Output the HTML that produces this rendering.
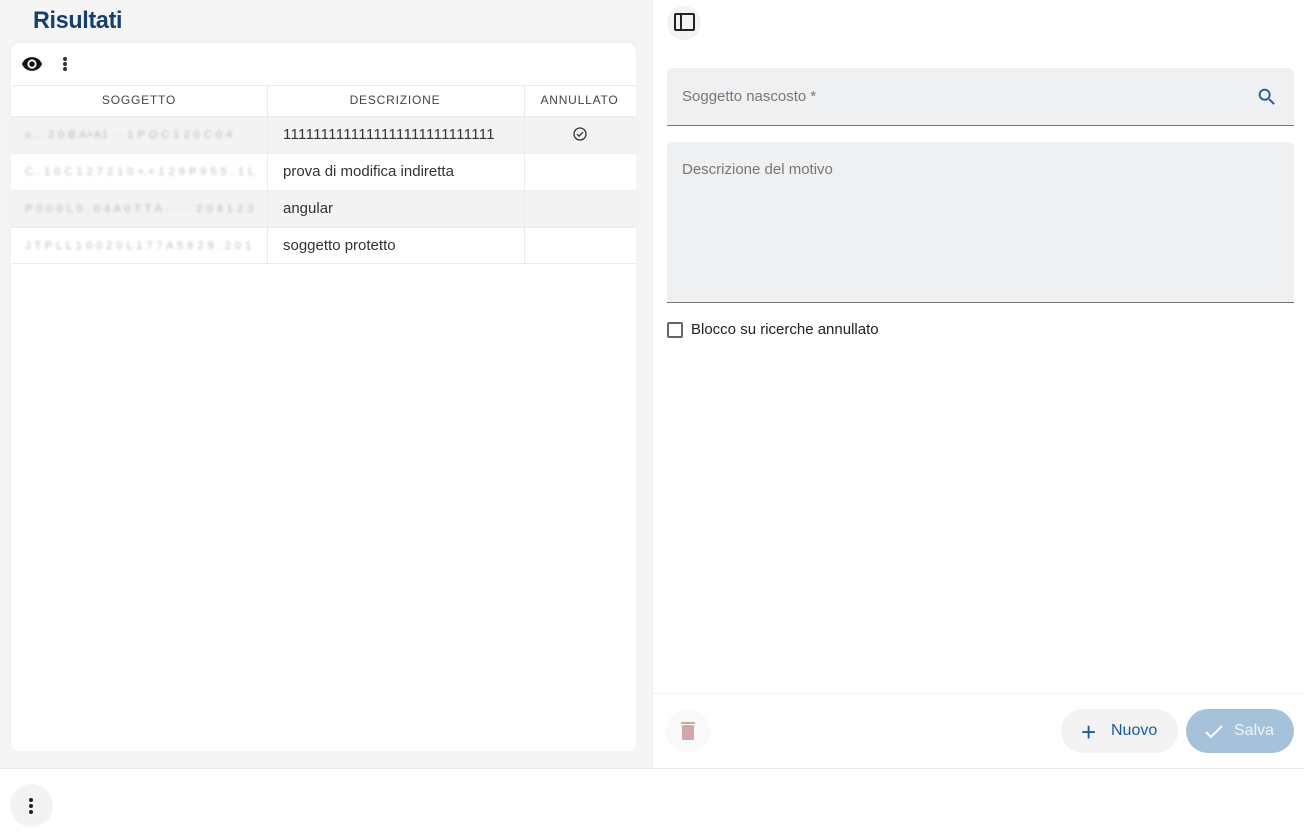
<!DOCTYPE html>
<html><head><meta charset="utf-8"><style>
*{box-sizing:border-box;margin:0;padding:0}
body{width:1304px;height:834px;position:relative;overflow:hidden;background:#fff;font-family:"Liberation Sans",sans-serif;color:#222}
.abs{position:absolute}
.left{left:0;top:0;width:652px;height:768px;background:#f5f5f5}
h1{position:absolute;left:33px;top:7px;font-size:24px;font-weight:bold;color:#173f6b;letter-spacing:-0.3px;transform:scaleX(.97);transform-origin:left}
.card{left:11px;top:43px;width:625px;height:708px;background:#fff;border-radius:8px;box-shadow:0 -2px 4px rgba(0,0,0,.04)}
.th{position:absolute;top:43px;height:30px;font-size:12px;letter-spacing:.8px;color:#444;text-align:center;line-height:28px}
.row{position:absolute;left:0;width:625px;height:37px;border-top:1px solid #ececec}
.cell{position:absolute;top:0;height:37px;line-height:36px;font-size:15px;color:#333}
.blur{left:14px;width:230px;color:#bbb;filter:blur(1.2px);font-size:11px;letter-spacing:.5px;overflow:hidden;white-space:nowrap}
.vl{position:absolute;top:43px;width:1px;height:178px;background:#ececec}
.field{position:absolute;left:667px;width:627px;background:#eff0f2;border-radius:6px 6px 0 0;border-bottom:1px solid #777}
.lbl{position:absolute;left:15px;font-size:15px;color:#777}
</style></head><body>
<div class="abs left"></div>
<h1>Risultati</h1>
<div class="abs card">
 <svg class="abs" style="left:9px;top:10px" width="24" height="22" viewBox="0 0 24 24"><path fill="#111" d="M12 4.5C7 4.5 2.7 7.6 1 12c1.7 4.4 6 7.5 11 7.5s9.3-3.1 11-7.5c-1.7-4.4-6-7.5-11-7.5zM12 17a5 5 0 1 1 0-10 5 5 0 0 1 0 10zm0-8a3 3 0 1 0 0 6 3 3 0 0 0 0-6z"/></svg>
 <div class="abs" style="left:52px;top:14px;width:4px;height:4px;border-radius:50%;background:#333;box-shadow:0 5px 0 #333,0 10px 0 #333"></div>
 <div class="abs" style="left:0;top:42px;width:625px;height:1px;background:#ececec"></div>
 <div class="th" style="left:0;width:256px">SOGGETTO</div>
 <div class="th" style="left:256px;width:256px">DESCRIZIONE</div>
 <div class="th" style="left:512px;width:113px">ANNULLATO</div>
 <div class="row" style="top:73px;background:#f3f3f3"><div class="cell blur">v.... 2 0 B A+A1 · · 1 P O C 1 2 0 C 0 4</div><div class="cell" style="left:272px;width:225px;overflow:hidden;white-space:nowrap;letter-spacing:.3px">1111111111111111111111111111</div>
 <svg class="abs" style="left:562px;top:10px" width="14" height="14" viewBox="0 0 14 14"><circle cx="7" cy="7" r="6" fill="none" stroke="#333" stroke-width="1.3"/><path d="M4 7.2l2 2 4-4" fill="none" stroke="#333" stroke-width="1.3"/></svg></div>
 <div class="row" style="top:110px"><div class="cell blur">C.. 1 0 C 1 2 7 2 1 0 +.+ 1 2 9 P 9 5 5 . 1 L</div><div class="cell" style="left:272px">prova di modifica indiretta</div></div>
 <div class="row" style="top:147px;background:#f3f3f3"><div class="cell blur">P 0 0 0 L 0 . 0 4 A 0 T T A · · · · 2 0 4 1 2 3</div><div class="cell" style="left:272px">angular</div></div>
 <div class="row" style="top:184px;border-bottom:1px solid #ececec"><div class="cell blur">J T P L L 1 0 0 2 0 L 1 7 7 A 5 9 2 9 . 2 0 1</div><div class="cell" style="left:272px">soggetto protetto</div></div>
 <div class="vl" style="left:256px"></div><div class="vl" style="left:513px"></div>
</div>
<div class="abs" style="left:652px;top:0;width:1px;height:768px;background:#eee"></div>
<div class="abs" style="left:667px;top:6px;width:34px;height:34px;border-radius:50%;background:#f3f3f3"></div>
<div class="abs" style="left:674px;top:13px;width:21px;height:18px;border:2px solid #222;border-radius:2px"></div>
<div class="abs" style="left:680px;top:13px;width:2px;height:18px;background:#222"></div>
<div class="field" style="top:68px;height:58px"><div class="lbl" style="top:20px">Soggetto nascosto *</div>
<svg class="abs" style="left:589px;top:18px" width="22" height="22" viewBox="0 0 24 24"><path fill="#1a5a9c" d="M15.5 14h-.8l-.3-.3A6.5 6.5 0 1 0 9.5 16a6.5 6.5 0 0 0 4.2-1.6l.3.3v.8l5 5 1.5-1.5-5-5zm-6 0A4.5 4.5 0 1 1 14 9.5 4.5 4.5 0 0 1 9.5 14z"/></svg></div>
<div class="field" style="top:142px;height:161px"><div class="lbl" style="top:19px">Descrizione del motivo</div></div>
<div class="abs" style="left:667px;top:322px;width:16px;height:16px;border:2px solid #666;border-radius:2px"></div>
<div class="abs" style="left:691px;top:321px;font-size:15px;color:#222">Blocco su ricerche annullato</div>
<div class="abs" style="left:652px;top:693px;width:652px;height:1px;background:#eee"></div>
<div class="abs" style="left:666px;top:709px;width:44px;height:44px;border-radius:50%;background:#f9f9f9"></div>
<svg class="abs" style="left:678px;top:720px" width="20" height="22" viewBox="0 0 20 22"><rect x="3" y="2" width="14" height="2" fill="#d4a5a5"/><rect x="4" y="5" width="12" height="15" rx="1.5" fill="#d4a5a5"/></svg>
<div class="abs" style="left:1061px;top:709px;width:117px;height:44px;border-radius:22px;background:#f3f3f3"></div>
<div class="abs" style="left:1081px;top:722px;font-size:26px;color:#1a5a9c;line-height:20px">+</div>
<div class="abs" style="left:1111px;top:722px;font-size:16px;color:#1a5a9c">Nuovo</div>
<div class="abs" style="left:1186px;top:709px;width:108px;height:44px;border-radius:22px;background:#a6c1da"></div>
<svg class="abs" style="left:1204px;top:723px" width="20" height="18" viewBox="0 0 20 18"><path d="M2 9l5 5 11-11" fill="none" stroke="#fff" stroke-width="2"/></svg>
<div class="abs" style="left:1234px;top:722px;font-size:16px;color:#eef3f8">Salva</div>
<div class="abs" style="left:0;top:768px;width:1304px;height:1px;background:#e8e8e8"></div>
<div class="abs" style="left:10px;top:784px;width:43px;height:43px;border-radius:50%;background:#f3f3f3"></div>
<div class="abs" style="left:29px;top:798px;width:4px;height:4px;border-radius:50%;background:#222;box-shadow:0 6px 0 #222,0 12px 0 #222"></div>
</body></html>
